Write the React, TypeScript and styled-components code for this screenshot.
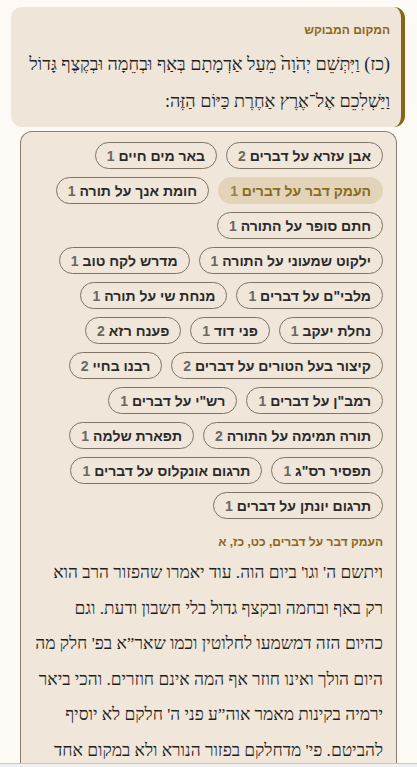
import React from "react";
import styled, { createGlobalStyle } from "styled-components";

const GlobalStyle = createGlobalStyle`
  html, body {
    margin: 0;
    padding: 0;
    background: #fdf9f5;
    overflow: hidden;
  }
  body {
    font-family: "Liberation Sans", "DejaVu Sans", sans-serif;
  }
`;

const books = [
  { name: "אבן עזרא על דברים", count: 2 },
  { name: "באר מים חיים", count: 1 },
  { name: "העמק דבר על דברים", count: 1, active: true },
  { name: "חומת אנך על תורה", count: 1 },
  { name: "חתם סופר על התורה", count: 1 },
  { name: "ילקוט שמעוני על התורה", count: 1 },
  { name: "מדרש לקח טוב", count: 1 },
  { name: 'מלבי"ם על דברים', count: 1 },
  { name: "מנחת שי על תורה", count: 1 },
  { name: "נחלת יעקב", count: 1 },
  { name: "פני דוד", count: 1 },
  { name: "פענח רזא", count: 2 },
  { name: "קיצור בעל הטורים על דברים", count: 2 },
  { name: "רבנו בחיי", count: 2 },
  { name: 'רמב"ן על דברים', count: 1 },
  { name: 'רש"י על דברים', count: 1 },
  { name: "תורה תמימה על התורה", count: 2 },
  { name: "תפארת שלמה", count: 1 },
  { name: 'תפסיר רס"ג', count: 1 },
  { name: "תרגום אונקלוס על דברים", count: 1 },
  { name: "תרגום יונתן על דברים", count: 1 },
];

const verse =
  "(כז) וַיִּתְּשֵׁם יְהֹוָה֙ מֵעַל אַדְמָתָם בְּאַף וּבְחֵמָה וּבְקֶצֶף גָּדוֹל וַיַּשְׁלִכֵם אֶל־אֶרֶץ אַחֶרֶת כַּיּוֹם הַזֶּה:";

const commentary =
  "ויתשם ה' וגו' ביום הוה. עוד יאמרו שהפזור הרב הוא רק באף ובחמה ובקצף גדול בלי חשבון ודעת. וגם כהיום הזה דמשמעו לחלוטין וכמו שאר”א בפ' חלק מה היום הולך ואינו חוזר אף המה אינם חוזרים. והכי ביאר ירמיה בקינות מאמר אוה”ע פני ה' חלקם לא יוסיף להביטם. פי' מדחלקם בפזור הנורא ולא במקום אחד";

function App() {
  return (
    <Page dir="rtl">
      <GlobalStyle />
      <SourceCard>
        <Label>המקום המבוקש</Label>
        <Verse>{verse}</Verse>
      </SourceCard>
      <ResultsCard>
        <ChipList>
          {books.map((b) => (
            <Chip key={b.name} $active={b.active}>
              {b.name} <Count $active={b.active}>{b.count}</Count>
            </Chip>
          ))}
        </ChipList>
        <CommentHeading>העמק דבר על דברים, כט, כז, א</CommentHeading>
        <CommentText>{commentary}</CommentText>
      </ResultsCard>
      <BottomBar />
    </Page>
  );
}

const Page = styled.div`
  display: flex;
  flex-direction: column;
  height: 767px;
  padding-top: 7px;
  box-sizing: border-box;
  overflow: hidden;
`;

const SourceCard = styled.div`
  margin: 0 12px 0 11px;
  padding: 15px 11px 8px 14px;
  background: #efe5d9;
  border-right: 4px solid #86651b;
  border-radius: 11px;
`;

const Label = styled.div`
  font-family: "Liberation Sans", "DejaVu Sans", sans-serif;
  font-weight: bold;
  font-size: 12px;
  color: #8a6718;
  line-height: 16px;
`;

const Verse = styled.div`
  margin-top: 8px;
  font-family: "Liberation Serif", "DejaVu Serif", serif;
  font-size: 18px;
  line-height: 36.5px;
  color: #1f1f1f;
`;

const ResultsCard = styled.div`
  margin: 4px 20px 0 20px;
  flex: 1;
  background: #f0e6da;
  border: 1px solid #8b7f70;
  border-bottom: none;
  border-radius: 12px 12px 0 0;
  padding: 10px 13px 0 13px;
`;

const ChipList = styled.div`
  display: flex;
  flex-wrap: wrap;
  gap: 8px 9px;
`;

const Chip = styled.div<{ $active?: boolean }>`
  height: 27px;
  box-sizing: border-box;
  display: flex;
  align-items: center;
  padding: 0 11px;
  border-radius: 14px;
  border: 1px solid ${(p) => (p.$active ? "transparent" : "#7f7365")};
  background: ${(p) => (p.$active ? "#e3d3b9" : "transparent")};
  font-family: "Liberation Sans", "DejaVu Sans", sans-serif;
  font-weight: bold;
  font-size: 14px;
  color: ${(p) => (p.$active ? "#8a6a1c" : "#2a2a2a")};
  white-space: pre;
`;

const Count = styled.span<{ $active?: boolean }>`
  color: ${(p) => (p.$active ? "#9a7f4a" : "#6a6660")};
`;

const CommentHeading = styled.div`
  margin-top: 15px;
  font-family: "Liberation Sans", "DejaVu Sans", sans-serif;
  font-weight: bold;
  font-size: 12px;
  color: #8a6718;
  line-height: 16px;
`;

const CommentText = styled.div`
  margin-top: 5px;
  font-family: "Liberation Serif", "DejaVu Serif", serif;
  font-size: 17.3px;
  line-height: 35.5px;
  color: #1f1f1f;
`;

const BottomBar = styled.div`
  position: fixed;
  left: 0;
  right: 0;
  bottom: 0;
  height: 3px;
  background: #f0f0f0;
  border-top: 1px solid #c9c9c9;
`;

export default App;
